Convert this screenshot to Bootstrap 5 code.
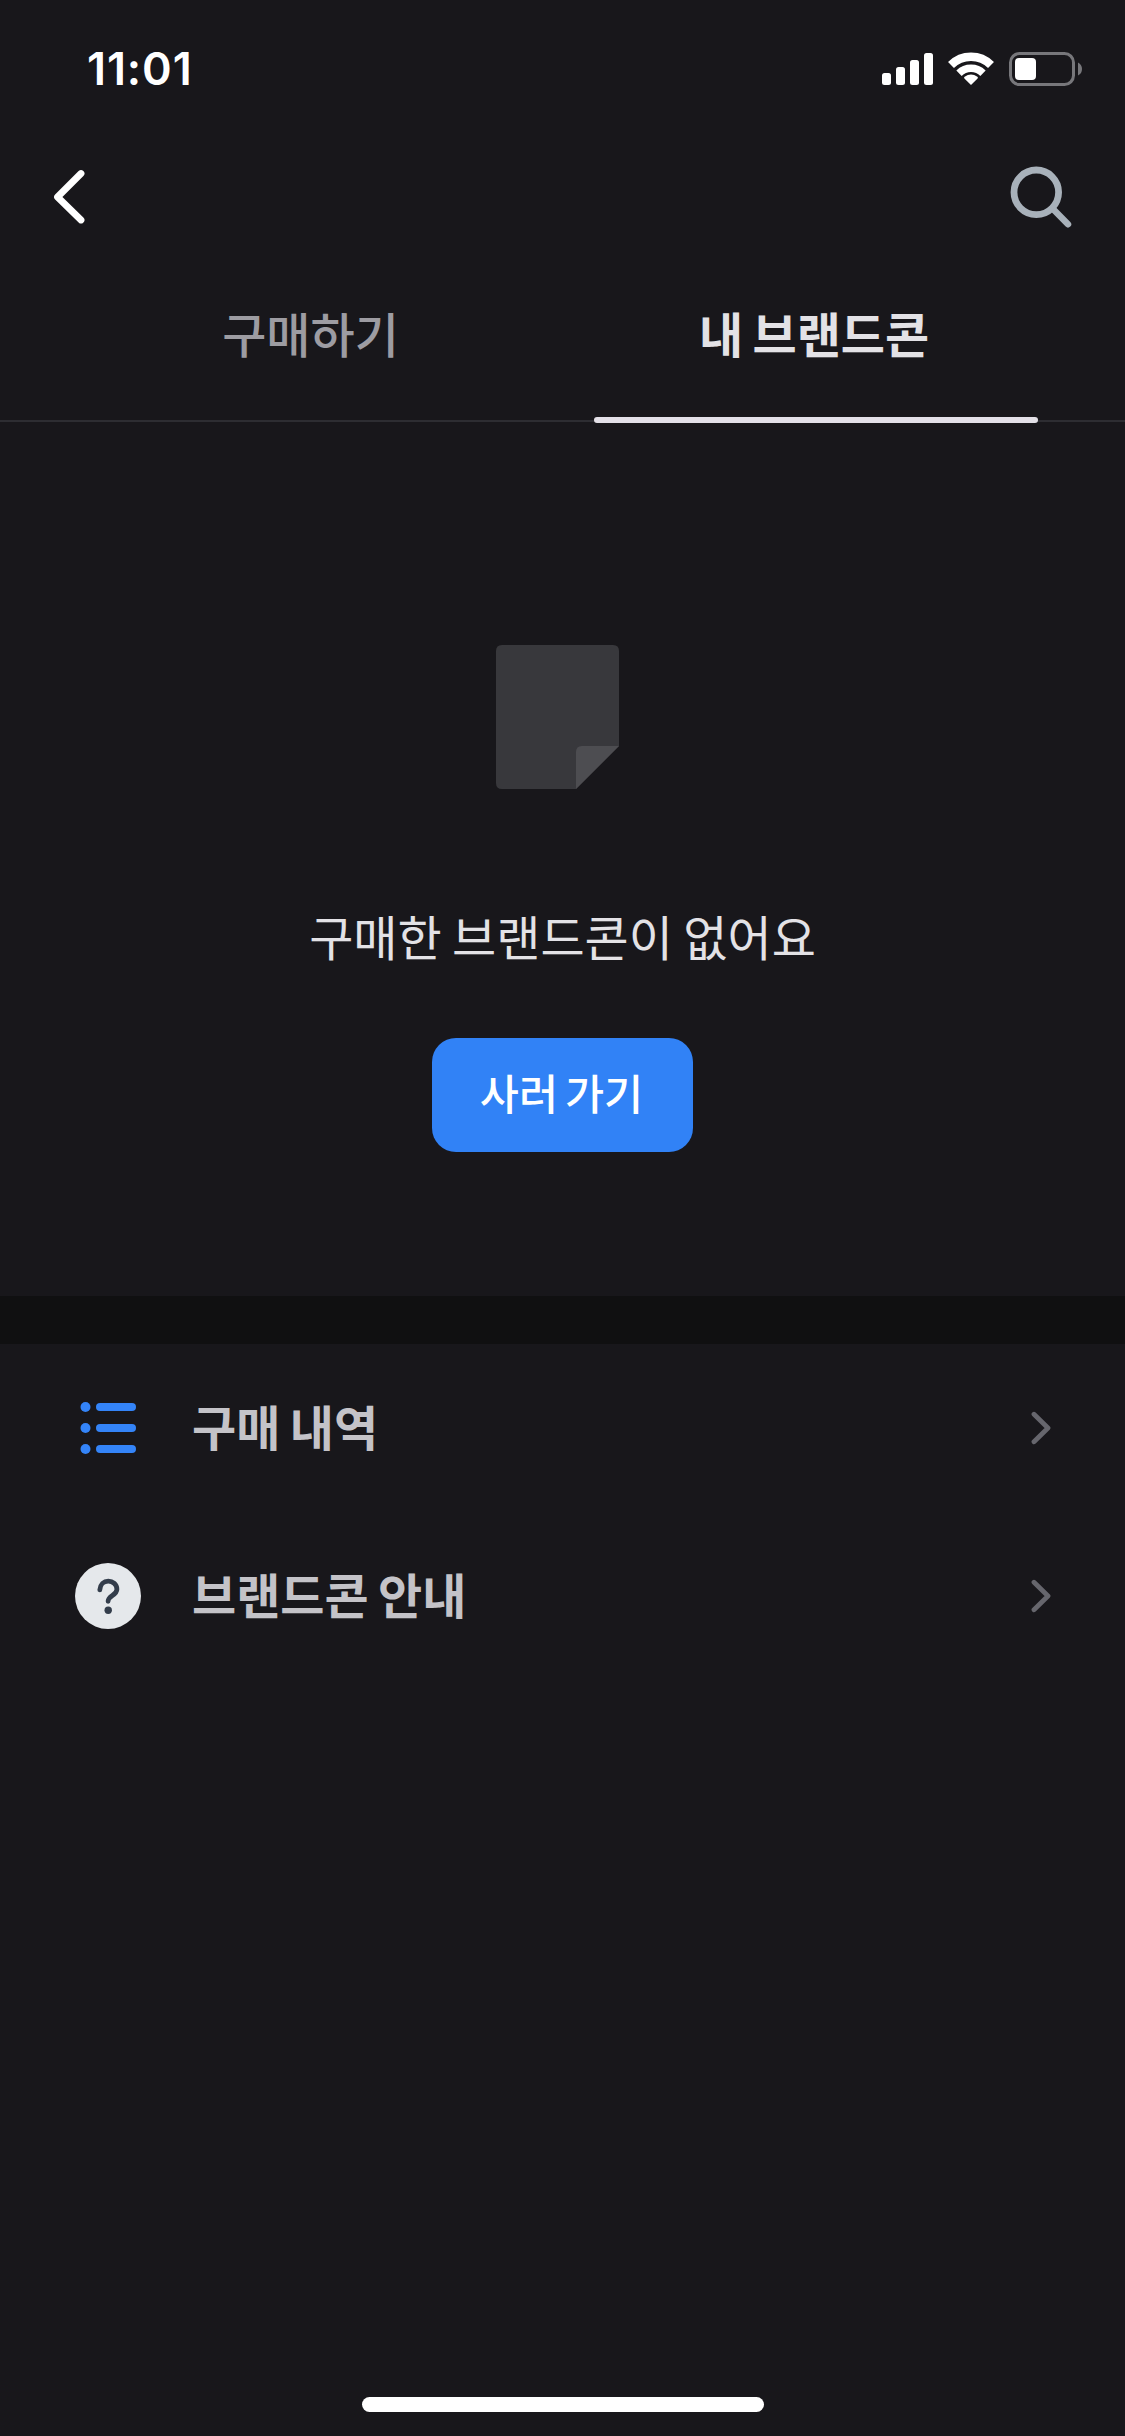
<!DOCTYPE html>
<html lang="ko" data-bs-theme="dark">
<head>
<meta charset="utf-8">
<meta name="viewport" content="width=device-width, initial-scale=1">
<title>내 브랜드콘</title>
<link href="https://cdn.jsdelivr.net/npm/bootstrap@5.3.0/dist/css/bootstrap.min.css" rel="stylesheet">
<style>
  body { background: #18171b; color: #e3e2e6; font-family: "Noto Sans CJK KR", "Noto Sans", sans-serif; font-size: 48px; line-height: 72px; word-spacing: -4px; }
  svg { display: block; flex: none; }
  .screen { height: 2436px; }
  .status-bar { height: 140px; padding: 52px 43px 0 87px; }
  .clock { font: 600 45px/34px Inter, sans-serif; letter-spacing: .9px; color: #fff; }
  .app-bar { height: 114px; padding: 0 52px 0 53px; }
  .tab-strip { height: 168px; padding: 0 87px; border-bottom: 2px solid #2d2d32; }
  .tab-strip .nav-link { height: 169px; padding: 42px 0 0 3px; color: #9d9ca2; font-weight: 500; border-bottom: 0; }
  .tab-strip .nav-link.active { padding-left: 0; color: #e3e2e6; font-weight: 700; background: none; }
  .tab-title { display: block; padding-right: 4px; }
  .tab-line { display: block; height: 6px; margin-top: 49px; border-radius: 3px; background: #e3e0e7; }
  .tab-item { width: 444px; }
  .empty-state { height: 874px; padding-top: 223px; }
  .note-icon { margin-right: 10px; }
  .empty-text { margin-top: 110px; word-spacing: -3px; }
  .buy-btn { width: 261px; height: 114px; margin-top: 67px; border-radius: 24px; background: #3182f6; color: #fff; font-size: 42.5px; font-weight: 500; word-spacing: -5px; padding: 0 2px 6px 0; border: 0; }
  .band { height: 48px; background: #101011; }
  .menu-row { height: 168px; padding: 0 72px 0 75px; background: transparent; border: 0; color: #c4c3c8; font-weight: 700; word-spacing: -4px; }
  .menu-label { margin-left: 51px; padding-bottom: 6px; }
  .home-bar { width: 402px; height: 15px; margin-bottom: 24px; }
</style>
</head>
<body>
<main class="screen d-flex flex-column overflow-hidden">
  <header>
    <div class="status-bar d-flex justify-content-between align-items-start">
      <span class="clock">11:01</span>
      <svg width="200" height="34" viewBox="882 52 200 34" fill="#fff">
        <rect x="882" y="73" width="9" height="12" rx="2.5"/><rect x="896" y="67" width="9" height="18" rx="2.5"/>
        <rect x="910" y="60" width="9" height="25" rx="2.5"/><rect x="924" y="53" width="9" height="32" rx="2.5"/>
        <g fill="none" stroke="#fff"><path stroke-width="8.4" d="M951 65A28.4 28.4 0 0 1 991 65"/><path stroke-width="7.6" d="M959 73.2A17.2 17.2 0 0 1 983 73.2"/></g>
        <path d="M971 85l-6.6-6.6q-.8-.9.2-1.6a11 11 0 0 1 12.8 0q1 .7.2 1.6z"/>
        <rect x="1010.5" y="53.5" width="63" height="31" rx="9" fill="none" stroke="#77777b" stroke-width="3"/>
        <rect x="1015" y="58" width="21" height="22" rx="4"/><path fill="#77777b" d="M1078 62.500q4 2 4 6.500t-4 6.500z"/>
      </svg>
    </div>
    <div class="app-bar d-flex justify-content-between align-items-center">
      <svg width="34" height="58" viewBox="53 168 34 58" fill="none" stroke="#fff" stroke-width="6.8" stroke-linecap="round" stroke-linejoin="round"><path d="M81 173.500L57.500 197 81 220"/></svg>
      <svg width="64" height="64" viewBox="1009 165 64 64" fill="none" stroke="#a8b1ba" stroke-linecap="round"><circle cx="1036.300" cy="192.300" r="22.300" stroke-width="6.800"/><path stroke-width="6.500" d="M1053 209l15 15.200"/></svg>
    </div>
  </header>
  <nav class="tab-strip nav flex-nowrap justify-content-between">
    <div class="tab-item text-center"><a class="nav-link" href="#">구매하기</a></div>
    <div class="tab-item text-center"><a class="nav-link active" href="#"><span class="tab-title">내 브랜드콘</span><span class="tab-line"></span></a></div>
  </nav>
  <section class="empty-state d-flex flex-column align-items-center">
    <svg class="note-icon" width="123" height="144" viewBox="0 0 123 144"><path fill="#38383c" d="M6 0H117Q123 0 123 6V101L80 144H6Q0 144 0 138V6Q0 0 6 0Z"/><path fill="#4d4d51" d="M80 144V107Q80 101 86 101H123Z"/></svg>
    <p class="empty-text mb-0">구매한 브랜드콘이 없어요</p>
    <button class="btn buy-btn">사러 가기</button>
  </section>
  <div class="band"></div>
  <section>
    <button class="menu-row w-100 d-flex align-items-center">
      <svg width="66" height="66" viewBox="75 1395 66 66" fill="#3484f8"><circle cx="85.500" cy="1407" r="5"/><circle cx="85.500" cy="1428" r="5"/><circle cx="85.500" cy="1449" r="5"/><rect x="96" y="1403" width="40" height="8" rx="4"/><rect x="96" y="1424" width="40" height="8" rx="4"/><rect x="96" y="1445" width="40" height="8" rx="4"/></svg>
      <span class="menu-label">구매 내역</span>
      <svg class="ms-auto" width="22" height="36" viewBox="1031 1410 22 36" fill="none" stroke="#66666d" stroke-width="4.800" stroke-linecap="round" stroke-linejoin="round"><path d="M1034 1414.300L1048 1428 1034 1441.700"/></svg>
    </button>
    <button class="menu-row w-100 d-flex align-items-center">
      <svg width="66" height="66" viewBox="75 1563 66 66"><circle cx="108" cy="1596" r="33" fill="#e5e8eb"/><path fill="none" stroke="#333d4b" stroke-width="4.800" stroke-linecap="round" d="M99.800 1589.800C100.200 1584.300 103.800 1581.100 108.300 1581.100S116.900 1584.500 116.900 1589.200C116.900 1595.500 108.200 1595.500 108.100 1601.300"/><circle cx="108.200" cy="1610.300" r="3.700" fill="#333d4b"/></svg>
      <span class="menu-label">브랜드콘 안내</span>
      <svg class="ms-auto" width="22" height="36" viewBox="1031 1410 22 36" fill="none" stroke="#66666d" stroke-width="4.800" stroke-linecap="round" stroke-linejoin="round"><path d="M1034 1414.300L1048 1428 1034 1441.700"/></svg>
    </button>
  </section>
  <div class="home-bar mt-auto mx-auto rounded-pill bg-white"></div>
</main>
<script src="https://cdn.jsdelivr.net/npm/bootstrap@5.3.0/dist/js/bootstrap.bundle.min.js"></script>
</body>
</html>
